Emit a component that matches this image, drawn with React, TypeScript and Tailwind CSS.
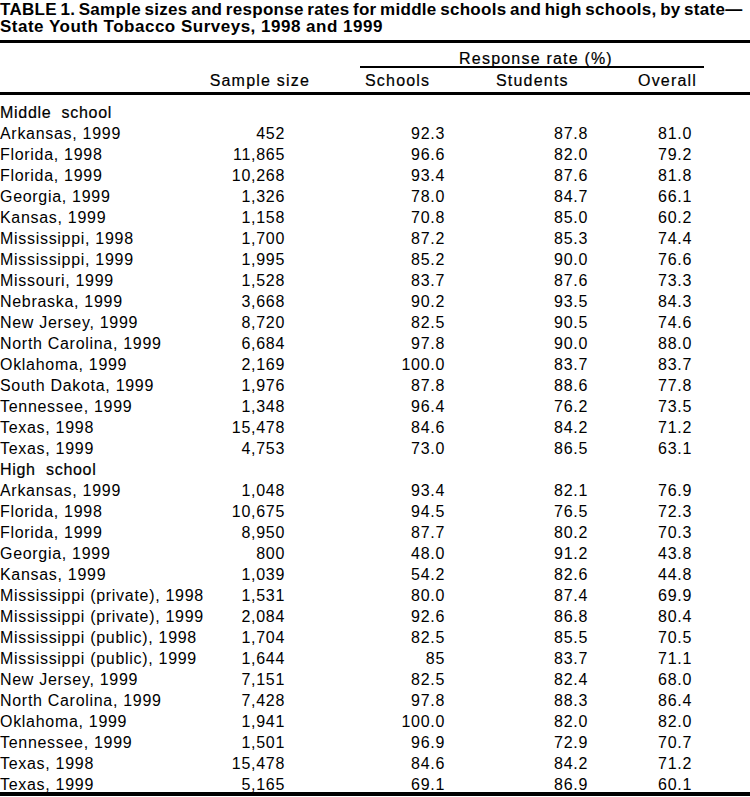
const middle: [string, string, string, string, string][] = [
  ["Arkansas, 1999", "452", "92.3", "87.8", "81.0"],
  ["Florida, 1998", "11,865", "96.6", "82.0", "79.2"],
  ["Florida, 1999", "10,268", "93.4", "87.6", "81.8"],
  ["Georgia, 1999", "1,326", "78.0", "84.7", "66.1"],
  ["Kansas, 1999", "1,158", "70.8", "85.0", "60.2"],
  ["Mississippi, 1998", "1,700", "87.2", "85.3", "74.4"],
  ["Mississippi, 1999", "1,995", "85.2", "90.0", "76.6"],
  ["Missouri, 1999", "1,528", "83.7", "87.6", "73.3"],
  ["Nebraska, 1999", "3,668", "90.2", "93.5", "84.3"],
  ["New Jersey, 1999", "8,720", "82.5", "90.5", "74.6"],
  ["North Carolina, 1999", "6,684", "97.8", "90.0", "88.0"],
  ["Oklahoma, 1999", "2,169", "100.0", "83.7", "83.7"],
  ["South Dakota, 1999", "1,976", "87.8", "88.6", "77.8"],
  ["Tennessee, 1999", "1,348", "96.4", "76.2", "73.5"],
  ["Texas, 1998", "15,478", "84.6", "84.2", "71.2"],
  ["Texas, 1999", "4,753", "73.0", "86.5", "63.1"],
];

const high: [string, string, string, string, string][] = [
  ["Arkansas, 1999", "1,048", "93.4", "82.1", "76.9"],
  ["Florida, 1998", "10,675", "94.5", "76.5", "72.3"],
  ["Florida, 1999", "8,950", "87.7", "80.2", "70.3"],
  ["Georgia, 1999", "800", "48.0", "91.2", "43.8"],
  ["Kansas, 1999", "1,039", "54.2", "82.6", "44.8"],
  ["Mississippi (private), 1998", "1,531", "80.0", "87.4", "69.9"],
  ["Mississippi (private), 1999", "2,084", "92.6", "86.8", "80.4"],
  ["Mississippi (public), 1998", "1,704", "82.5", "85.5", "70.5"],
  ["Mississippi (public), 1999", "1,644", "85", "83.7", "71.1"],
  ["New Jersey, 1999", "7,151", "82.5", "82.4", "68.0"],
  ["North Carolina, 1999", "7,428", "97.8", "88.3", "86.4"],
  ["Oklahoma, 1999", "1,941", "100.0", "82.0", "82.0"],
  ["Tennessee, 1999", "1,501", "96.9", "72.9", "70.7"],
  ["Texas, 1998", "15,478", "84.6", "84.2", "71.2"],
  ["Texas, 1999", "5,165", "69.1", "86.9", "60.1"],
];

function Row({ r }: { r: [string, string, string, string, string] }) {
  return (
    <div className="grid grid-cols-[220px_65px_160px_143px_104px] h-[21px] leading-[21px]">
      <div className="whitespace-pre">{r[0]}</div>
      <div className="text-right">{r[1]}</div>
      <div className="text-right">{r[2]}</div>
      <div className="text-right">{r[3]}</div>
      <div className="text-right">{r[4]}</div>
    </div>
  );
}

function Section({ title, rows }: { title: string; rows: typeof middle }) {
  return (
    <>
      <div className="h-[21px] leading-[21px] whitespace-pre [-webkit-text-stroke:0.2px_black]">
        {title}
      </div>
      {rows.map((r, i) => (
        <Row key={i} r={r} />
      ))}
    </>
  );
}

export default function App() {
  return (
    <div className="w-[750px] h-[797px] overflow-hidden bg-white text-black font-['Liberation_Sans',Arial,sans-serif]">
      {/* title */}
      <h1 className="text-[17px] leading-[17px] font-bold pt-[1px]">
        <span className="block whitespace-nowrap tracking-[0.3px] [word-spacing:-1.5px]">
          TABLE 1. Sample sizes and response rates for middle schools and high schools, by state—
        </span>
        <span className="block whitespace-nowrap tracking-[0.5px]">
          State Youth Tobacco Surveys, 1998 and 1999
        </span>
      </h1>
      <div className="mt-[5px] h-[3px] bg-black" />

      {/* column headers */}
      <div className="flex text-[16px] leading-[16px] tracking-[1.2px] [-webkit-text-stroke:0.2px_black]">
        <div className="w-[360px] flex items-end justify-end pr-[50px]">Sample size</div>
        <div className="w-[344px] flex flex-col">
          <div className="mt-[9px] leading-[14px] text-center border-b-2 border-black whitespace-pre pl-[8px]">
            Response rate (%)
          </div>
          <div className="mt-[5px] grid grid-cols-[136px_142px_66px]">
            <div className="pl-[5px]">Schools</div>
            <div>Students</div>
            <div className="text-right pr-[9px]">Overall</div>
          </div>
        </div>
      </div>
      <div className="mt-[3px] h-[3px] bg-black" />

      {/* body */}
      <div className="mt-[7px] text-[16px] tracking-[0.7px]">
        <Section title="Middle  school" rows={middle} />
        <Section title="High  school" rows={high} />
      </div>
      <div className="-mt-[3px] h-[4px] bg-black" />
    </div>
  );
}
